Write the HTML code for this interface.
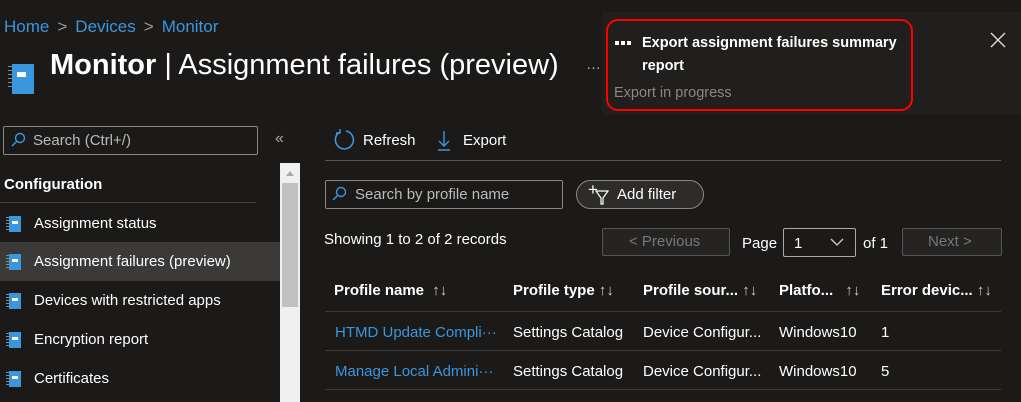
<!DOCTYPE html>
<html><head><meta charset="utf-8"><style>
*{margin:0;padding:0;box-sizing:border-box}
body{width:1021px;height:402px;overflow:hidden;background:#1b1a19;font-family:"Segoe UI","Liberation Sans",sans-serif;color:#fff;position:relative;font-size:15px}
.a{position:absolute;white-space:nowrap}
.bc{top:17px;left:4px;font-size:17px;color:#3a96dd}
.bc span{color:#999;margin:0 8px}
.title{top:49px;left:50px;font-size:29px;color:#fff}
.nbk{position:absolute;width:18px;height:26px;background:#3a96dd}
.nbk:after{content:"";position:absolute;left:5px;top:8px;width:9px;height:5px;background:#fff}
.nbk:before{content:"";position:absolute;left:-4px;top:2px;width:4px;height:22px;background:repeating-linear-gradient(#888 0 1px,transparent 1px 4px)}
.sm{width:12px;height:16px}
.sm:after{left:3px;top:5px;width:6px;height:3px}
.sm:before{left:-3px;top:1px;width:3px;height:14px;background:repeating-linear-gradient(#888 0 1px,transparent 1px 3px)}
.box{position:absolute;border:1px solid #8a8886;border-radius:2px}
.item{position:absolute;left:0;width:280px;height:39px;font-size:15px}
.item .t{position:absolute;left:34px;top:11px}
.item .nbk{left:9px;top:12px}
.hd{font-weight:bold;font-size:15px}
.link{color:#3a96dd}
.line{position:absolute;height:1px;background:#3b3a39}
.dot{position:absolute;width:4px;height:4px;background:#fff}
</style></head><body>
<div class="a bc">Home<span>&gt;</span>Devices<span>&gt;</span>Monitor</div>
<div class="nbk" style="left:12px;top:64px;width:22px;height:30px"></div>
<div class="a title"><b>Monitor</b> | Assignment failures (preview)</div>
<div class="a" style="left:586px;top:56px;color:#aaa">…</div>

<div class="box" style="left:3px;top:126px;width:255px;height:29px"></div>
<svg class="a" style="left:10px;top:132px" width="16" height="16"><circle cx="10" cy="6" r="4.5" fill="none" stroke="#3a96dd" stroke-width="1.4"/><line x1="7" y1="9" x2="2" y2="14" stroke="#3a96dd" stroke-width="1.5"/></svg>
<div class="a" style="left:33px;top:132px;color:#bbb">Search (Ctrl+/)</div>
<div class="a" style="left:275px;top:130px;color:#aaa;font-size:16px">«</div>
<div class="a hd" style="left:4px;top:176px">Configuration</div>
<div class="line" style="left:0;top:202px;width:256px;background:#444"></div>
<div class="item" style="top:204px"><div class="nbk sm"></div><div class="t">Assignment status</div></div>
<div class="item" style="top:242px;background:#3b3a39"><div class="nbk sm"></div><div class="t">Assignment failures (preview)</div></div>
<div class="item" style="top:281px"><div class="nbk sm"></div><div class="t">Devices with restricted apps</div></div>
<div class="item" style="top:320px"><div class="nbk sm"></div><div class="t">Encryption report</div></div>
<div class="item" style="top:359px"><div class="nbk sm"></div><div class="t">Certificates</div></div>
<div class="a" style="left:280px;top:163px;width:20px;height:239px;background:#f0f0f0"></div>
<div class="a" style="left:282px;top:183px;width:16px;height:124px;background:#c1c1c1"></div>
<div class="a" style="left:286px;top:171px;width:0;height:0;border:4px solid transparent;border-bottom:5px solid #aaa;border-top:0"></div>

<svg class="a" style="left:332px;top:128px" width="24" height="24"><path d="M8 4 A9 9 0 1 0 14 3" fill="none" stroke="#3a96dd" stroke-width="1.6"/><path d="M8 1 L8 5 L4 5" fill="none" stroke="#3a96dd" stroke-width="1.4"/></svg>
<div class="a" style="left:363px;top:132px">Refresh</div>
<svg class="a" style="left:436px;top:130px" width="16" height="22"><path d="M8 1 V16 M3 11 L8 16 L13 11 M2 20 H14" fill="none" stroke="#3a96dd" stroke-width="1.4"/></svg>
<div class="a" style="left:463px;top:132px">Export</div>
<div class="line" style="left:325px;top:160px;width:676px;background:#555"></div>

<div class="box" style="left:325px;top:180px;width:238px;height:29px"></div>
<svg class="a" style="left:331px;top:186px" width="16" height="16"><circle cx="10" cy="6" r="4.5" fill="none" stroke="#3a96dd" stroke-width="1.4"/><line x1="7" y1="9" x2="2" y2="14" stroke="#3a96dd" stroke-width="1.5"/></svg>
<div class="a" style="left:355px;top:186px;color:#bbb">Search by profile name</div>
<div class="box" style="left:576px;top:180px;width:128px;height:29px;border-radius:15px;background:#2d2c2b"></div>
<div class="a" style="left:588px;top:180px;font-size:17px">+</div>
<svg class="a" style="left:595px;top:190px" width="14" height="16"><path d="M1 1 H13 L8 8 V14 L6 14 V8 Z" fill="none" stroke="#fff" stroke-width="1.2"/></svg>
<div class="a" style="left:617px;top:186px">Add filter</div>

<div class="a" style="left:324px;top:231px">Showing 1 to 2 of 2 records</div>
<div class="box" style="left:602px;top:228px;width:128px;height:28px;border-color:#555;background:#252423"></div>
<div class="a" style="left:629px;top:233px;color:#777">&lt; Previous</div>
<div class="a" style="left:742px;top:235px">Page</div>
<div class="box" style="left:783px;top:228px;width:73px;height:29px;border-color:#aaa"></div>
<div class="a" style="left:794px;top:235px">1</div>
<svg class="a" style="left:830px;top:237px" width="14" height="10"><path d="M1 2 L7 8 L13 2" fill="none" stroke="#ccc" stroke-width="1.3"/></svg>
<div class="a" style="left:863px;top:235px">of 1</div>
<div class="box" style="left:902px;top:228px;width:100px;height:28px;border-color:#555;background:#252423"></div>
<div class="a" style="left:928px;top:233px;color:#777">Next &gt;</div>

<div class="a hd" style="left:334px;top:282px">Profile name <span style="font-weight:normal;color:#ccc;margin-left:4px">↑↓</span></div>
<div class="a hd" style="left:513px;top:282px">Profile type <span style="font-weight:normal;color:#ccc">↑↓</span></div>
<div class="a hd" style="left:643px;top:282px">Profile sour... <span style="font-weight:normal;color:#ccc">↑↓</span></div>
<div class="a hd" style="left:779px;top:282px">Platfo... <span style="font-weight:normal;color:#ccc;margin-left:8px">↑↓</span></div>
<div class="a hd" style="left:881px;top:282px">Error devic... <span style="font-weight:normal;color:#ccc">↑↓</span></div>
<div class="line" style="left:325px;top:311px;width:676px"></div>
<div class="a link" style="left:335px;top:324px">HTMD Update Compli···</div>
<div class="a" style="left:513px;top:324px">Settings Catalog</div>
<div class="a" style="left:643px;top:324px">Device Configur...</div>
<div class="a" style="left:779px;top:324px">Windows10</div>
<div class="a" style="left:881px;top:324px">1</div>
<div class="line" style="left:325px;top:350px;width:676px"></div>
<div class="a link" style="left:335px;top:363px">Manage Local Admini···</div>
<div class="a" style="left:513px;top:363px">Settings Catalog</div>
<div class="a" style="left:643px;top:363px">Device Configur...</div>
<div class="a" style="left:779px;top:363px">Windows10</div>
<div class="a" style="left:881px;top:363px">5</div>
<div class="line" style="left:325px;top:389px;width:676px"></div>

<div class="a" style="left:602px;top:12px;width:419px;height:103px;background:#201f1e"></div>
<div class="a" style="left:606px;top:19px;width:307px;height:92px;border:2px solid #f00;border-radius:12px"></div>
<div class="dot" style="left:615px;top:41px"></div><div class="dot" style="left:621px;top:41px"></div><div class="dot" style="left:627px;top:41px"></div>
<div class="a" style="left:642px;top:32px;font-weight:bold;font-size:14.5px;line-height:23px">Export assignment failures summary<br>report</div>
<div class="a" style="left:614px;top:85px;color:#8a8886;font-size:14.5px">Export in progress</div>
<svg class="a" style="left:990px;top:32px" width="16" height="16"><path d="M1 1 L15 15 M15 1 L1 15" stroke="#ddd" stroke-width="1.4"/></svg>
</body></html>
